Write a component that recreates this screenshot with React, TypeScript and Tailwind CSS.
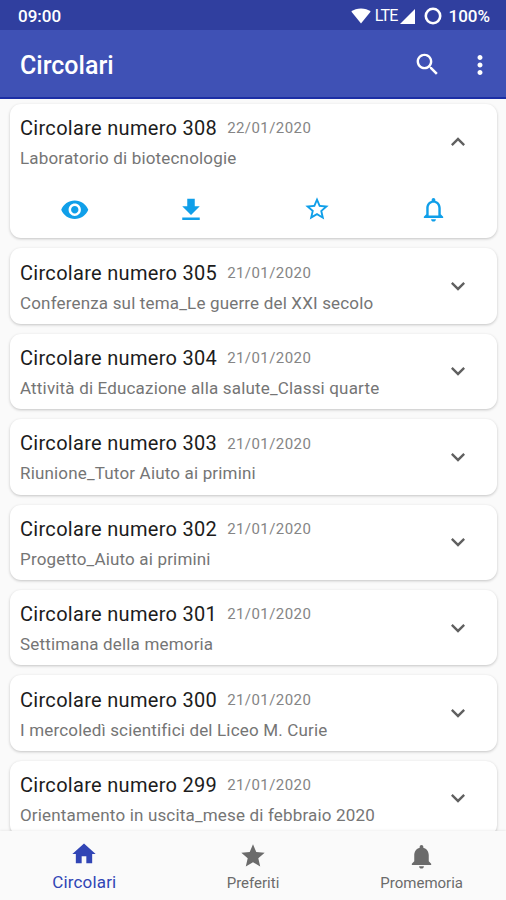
const paths = {
  search: 'M15.5 14h-.79l-.28-.27C15.41 12.59 16 11.11 16 9.5 16 5.91 13.09 3 9.5 3S3 5.91 3 9.5 5.91 16 9.5 16c1.61 0 3.09-.59 4.23-1.57l.27.28v.79l5 4.99L20.49 19l-4.99-5zm-6 0C7.01 14 5 11.99 5 9.5S7.01 5 9.5 5 14 7.01 14 9.5 11.99 14 9.5 14z',
  more: 'M12 8c1.1 0 2-.9 2-2s-.9-2-2-2-2 .9-2 2 .9 2 2 2zm0 2c-1.1 0-2 .9-2 2s.9 2 2 2 2-.9 2-2-.9-2-2-2zm0 6c-1.1 0-2 .9-2 2s.9 2 2 2 2-.9 2-2-.9-2-2-2z',
  eye: 'M12 4.5C7 4.5 2.73 7.61 1 12c1.73 4.39 6 7.5 11 7.5s9.27-3.11 11-7.5c-1.73-4.39-6-7.5-11-7.5zM12 17c-2.76 0-5-2.24-5-5s2.24-5 5-5 5 2.24 5 5-2.24 5-5 5zm0-8c-1.66 0-3 1.34-3 3s1.34 3 3 3 3-1.34 3-3-1.34-3-3-3z',
  download: 'M19 9h-4V3H9v6H5l7 7 7-7zM5 18v2h14v-2H5z',
  starBorder: 'M22 9.24l-7.19-.62L12 2 9.19 8.63 2 9.24l5.46 4.73L5.82 21 12 17.27 18.18 21l-1.63-7.03L22 9.24zM12 15.4l-3.76 2.27 1-4.28-3.32-2.88 4.38-.38L12 6.1l1.71 4.04 4.38.38-3.32 2.88 1 4.28L12 15.4z',
  bellBorder: 'M12 22c1.1 0 2-.9 2-2h-4c0 1.1.9 2 2 2zm6-6v-5c0-3.07-1.63-5.64-4.5-6.32V4c0-.83-.67-1.5-1.5-1.5s-1.5.67-1.5 1.5v.68C7.64 5.36 6 7.92 6 11v5l-2 2v1h16v-1l-2-2zm-2 1H8v-6c0-2.48 1.51-4.5 4-4.5s4 2.02 4 4.5v6z',
  less: 'M12 8l-6 6 1.41 1.41L12 10.83l4.59 4.58L18 14z',
  expand: 'M16.59 8.59L12 13.17 7.41 8.59 6 10l6 6 6-6z',
  home: 'M10 20v-6h4v6h5v-8h3L12 3 2 12h3v8z',
  star: 'M12 17.27L18.18 21l-1.64-7.03L22 9.24l-7.19-.61L12 2 9.19 8.63 2 9.24l5.46 4.73L5.82 21z',
  bell: 'M12 22c1.1 0 2-.9 2-2h-4c0 1.1.89 2 2 2zm6-6v-5c0-3.07-1.64-5.64-4.5-6.32V4c0-.83-.67-1.5-1.5-1.5s-1.5.67-1.5 1.5v.68C7.63 5.36 6 7.92 6 11v5l-2 2v1h16v-1l-2-2z',
};

const Icon = ({ name, className }: { name: keyof typeof paths; className: string }) => (
  <svg viewBox="0 0 24 24" fill="currentColor" className={`shrink-0 ${className}`}>
    <path d={paths[name]} />
  </svg>
);

const circolari = [
  { numero: 308, data: '22/01/2020', oggetto: 'Laboratorio di biotecnologie', open: true },
  { numero: 305, data: '21/01/2020', oggetto: 'Conferenza sul tema_Le guerre del XXI secolo' },
  { numero: 304, data: '21/01/2020', oggetto: 'Attività di Educazione alla salute_Classi quarte' },
  { numero: 303, data: '21/01/2020', oggetto: 'Riunione_Tutor Aiuto ai primini' },
  { numero: 302, data: '21/01/2020', oggetto: 'Progetto_Aiuto ai primini' },
  { numero: 301, data: '21/01/2020', oggetto: 'Settimana della memoria' },
  { numero: 300, data: '21/01/2020', oggetto: 'I mercoledì scientifici del Liceo M. Curie' },
  { numero: 299, data: '21/01/2020', oggetto: 'Orientamento in uscita_mese di febbraio 2020' },
];

const StatusBar = () => (
  <div className="flex h-[30px] shrink-0 items-center bg-[#303f9f] pr-[16px] pl-[18px] pt-[2px] text-[17px] font-medium text-white">
    <span className="pt-px">09:00</span>
    <svg viewBox="0 0 20 16" className="ml-auto h-[16px] w-[20px]" fill="currentColor">
      <path d="M10 15.5L.3 3.6C2.8 1.5 6.2.4 10 .4s7.2 1.1 9.7 3.2z" />
    </svg>
    <span className="ml-[4px] text-[16px] font-normal tracking-[-0.8px]">LTE</span>
    <svg viewBox="0 0 15 15" className="ml-[3px] size-[15px]" fill="currentColor">
      <path d="M15 0v15H0z" />
    </svg>
    <svg viewBox="0 0 18 18" className="ml-[9px] size-[18px]" fill="none" stroke="currentColor" strokeWidth="2.6">
      <circle cx="9" cy="9" r="7.2" />
    </svg>
    <span className="ml-[6px] pt-px">100%</span>
  </div>
);

const Card = ({ numero, data, oggetto, open }: { numero: number; data: string; oggetto: string; open?: boolean }) => (
  <div className="shrink-0 rounded-[11px] bg-white shadow-[0_1px_3px_rgba(0,0,0,0.22)]">
    <div className="flex h-[75.4px] items-center pr-[25px] pl-[10px]">
      <div className="flex-1 pt-[3px] whitespace-nowrap">
        <div className="flex h-[30px] items-center">
          <span className="text-[20px] tracking-[0.3px] text-[#1c1c1c]">Circolare numero {numero}</span>
          <span className="ml-[10px] pt-px text-[15px] tracking-[0.43px] text-[#858585]">{data}</span>
        </div>
        <div className="h-[30px] text-[17px] leading-[30px] tracking-[0.17px] text-[#757575]">{oggetto}</div>
      </div>
      <Icon name={open ? 'less' : 'expand'} className="size-[28px] text-[#606060]" />
    </div>
    {open && (
      <div className="flex h-[59px] items-start pt-[15.5px] text-[#109fe9]">
        <Icon name="eye" className="ml-[49.5px] size-[29.5px]" />
        <Icon name="download" className="ml-[87px] size-[30px]" />
        <Icon name="starBorder" className="ml-[96.5px] size-[28px]" />
        <Icon name="bellBorder" className="ml-[88px] size-[29px]" />
      </div>
    )}
  </div>
);

const App = () => {
  return (
    <div className="flex h-[900px] w-[506px] flex-col overflow-hidden bg-[#fafafa] font-[Roboto,sans-serif]">
      <StatusBar />
      <header className="flex h-[69px] shrink-0 items-center border-b-2 border-[#1c2ea5] bg-[#3f51b5] pr-[11px] pl-[20px] text-white">
        <h1 className="flex-1 pt-[5px] text-[25px] font-medium">Circolari</h1>
        <Icon name="search" className="mt-[2px] size-[29px]" />
        <Icon name="more" className="mt-[2px] ml-[23px] size-[30px]" />
      </header>
      <main className="flex min-h-0 flex-1 flex-col gap-[10px] overflow-hidden pt-[5px] pr-[9px] pl-[10px]">
        {circolari.map((c) => (
          <Card key={c.numero} numero={c.numero} data={c.data} oggetto={c.oggetto} open={c.open} />
        ))}
      </main>
      <nav className="z-10 grid h-[69px] shrink-0 grid-cols-3 bg-[#fafafa] text-[#6b6b6b] shadow-[0_-1px_2px_rgba(0,0,0,0.06)]">
        <div className="flex flex-col items-center pt-[9px] text-[#3145b5]">
          <Icon name="home" className="size-[28px]" />
          <span className="text-[17px] leading-[29px] tracking-[0.15px]">Circolari</span>
        </div>
        <div className="flex flex-col items-center pt-[11px]">
          <Icon name="star" className="size-[28px]" />
          <span className="text-[15px] leading-[27px]">Preferiti</span>
        </div>
        <div className="flex flex-col items-center pt-[11px]">
          <Icon name="bell" className="size-[29px]" />
          <span className="text-[15px] leading-[25px]">Promemoria</span>
        </div>
      </nav>
    </div>
  );
};

export default App;
